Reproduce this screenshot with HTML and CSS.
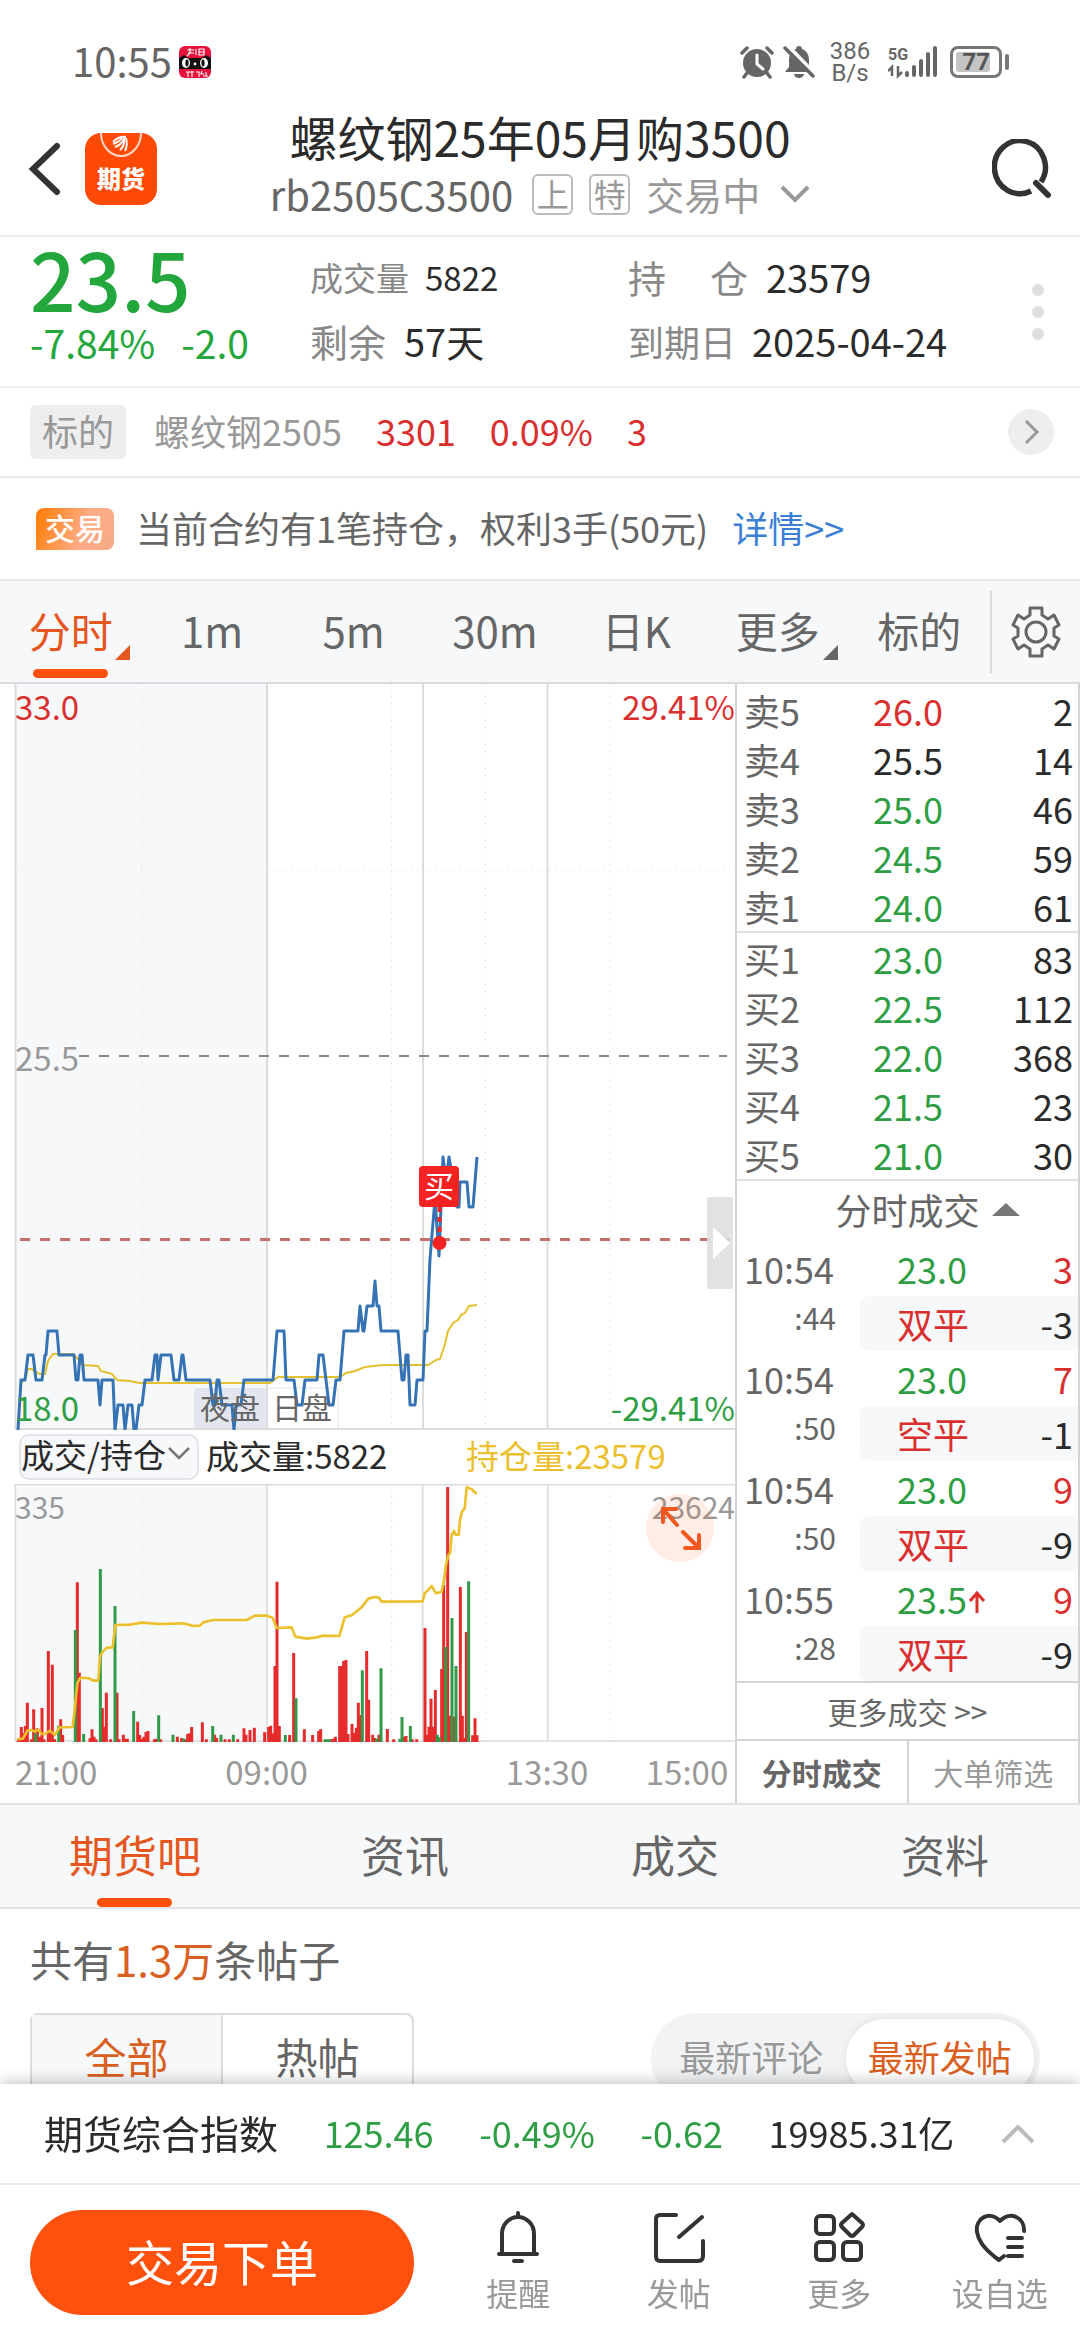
FILE: index.html
```html
<!DOCTYPE html>
<html lang="zh-CN">
<head>
    <meta charset="UTF-8">
    <meta name="viewport" content="width=device-width, initial-scale=1.0">
    <title>螺纹钢25年05月购3500</title>
    <link rel="stylesheet" href="styles.css">
</head>
<body>

    <!-- Status bar -->
    <div class="status-bar">
        <span class="clock">10:55</span>
        <svg class="app-badge" viewBox="0 0 34 34" width="34" height="34">
            <rect x="1" y="1" width="32" height="32" rx="6" fill="#e5133c"/>
            <path d="M1 13l5-3 4 3h14l4-3 5 3v11H1z" fill="#111"/>
            <ellipse cx="8" cy="18" rx="4" ry="5" fill="#fff"/>
            <ellipse cx="26" cy="18" rx="4" ry="5" fill="#fff"/>
            <ellipse cx="9" cy="18" rx="1.6" ry="3.4" fill="#111"/>
            <ellipse cx="25" cy="18" rx="1.6" ry="3.4" fill="#111"/>
            <circle cx="17" cy="19" r="1.4" fill="#fff"/>
            <path d="M9 5h7M10 8h6M12 3v5l-3 3M18 4v6M21 4h5v6h-5zM21 7h5M8 27h8M10 27v5M14 26v6M18 27h3v5M24 26l-1 3h3M25 31h5M28 27v4" stroke="#fff" stroke-width="1.1" fill="none"/>
        </svg>
        <div class="status-icons">
            <svg viewBox="0 0 34 34" width="34" height="34">
                <circle cx="17" cy="18" r="14" fill="#666"/>
                <path d="M2 8l5-5M32 8l-5-5M7 28l-3 4M27 28l3 4" stroke="#666" stroke-width="3.5" stroke-linecap="round"/>
                <path d="M17 10v9l6 5" stroke="#fff" stroke-width="3" fill="none" stroke-linecap="round"/>
            </svg>
            <svg viewBox="0 0 34 34" width="34" height="34">
                <path d="M17 1c2 0 3 1 3 3 5 2 7 6 7 11v7l4 5H3l4-5v-7c0-5 2-9 7-11 0-2 1-3 3-3z" fill="#666"/>
                <path d="M12 29h10a5 4 0 0 1-10 0z" fill="#666"/>
                <path d="M5 0l28 29" stroke="#fff" stroke-width="4"/>
                <path d="M3 3l28 28" stroke="#666" stroke-width="3.5" stroke-linecap="round"/>
            </svg>
            <span class="net-speed">386<br>B/s</span>
            <svg viewBox="0 0 50 34" width="50" height="34">
                <text x="0" y="15" class="net-type">5G</text>
                <path d="M4 31V22l-4 4M10 21v10l4-4" stroke="#666" stroke-width="2.5" fill="none"/>
                <path d="M19 28v2M26 22v8M33 16v14M40 9v21M47 3v27" stroke="#666" stroke-width="4" stroke-linecap="round"/>
            </svg>
            <span class="battery"><span class="battery-level">77</span></span>
        </div>
    </div>

    <!-- Header -->
    <header class="header">
        <a href="#" class="back" aria-label="返回">
            <svg viewBox="0 0 34 54" width="34" height="54"><path d="M29 4L5 27l24 23" fill="none" stroke="#333" stroke-width="6" stroke-linecap="round"/></svg>
        </a>
        <div class="app-logo">
            <svg viewBox="0 0 72 26" width="72" height="26">
                <path d="M16 0a20 23 0 0 0 40 0" fill="none" stroke="#ffd5c5" stroke-width="2"/>
                <path d="M28 9q6-6 13-5M28 11q6-2 9-6M30 14q6-2 9-8M35 17q5-4 4-12M40 18q3-6 1-13" fill="none" stroke="#fff" stroke-width="2"/>
            </svg>
            <span>期货</span>
        </div>
        <div class="heading">
            <h1>螺纹钢25年05月购3500</h1>
            <div class="sub-heading">
                <span class="code">rb2505C3500</span>
                <span class="mark">上</span>
                <span class="mark">特</span>
                <span class="state">交易中</span>
                <svg viewBox="0 0 30 20" width="30" height="20"><path d="M2 3l13 13L28 3" fill="none" stroke="#999" stroke-width="4"/></svg>
            </div>
        </div>
        <button class="search" aria-label="搜索">
            <svg viewBox="0 0 60 60" width="60" height="60"><path d="M39 52a25.500 26.500 0 1 1 10-9" fill="none" stroke="#333" stroke-width="5.500"/><path d="M44 44l12 12" stroke="#333" stroke-width="6" stroke-linecap="round"/></svg>
        </button>
    </header>

    <!-- Quote -->
    <section class="quote">
        <div class="quote-main">
            <div class="price">23.5</div>
            <div class="change"><span>-7.84%</span><span>-2.0</span></div>
        </div>
        <div class="quote-col">
            <div class="small"><span class="caption">成交量</span>5822</div>
            <div><span class="caption">剩余</span>57天</div>
        </div>
        <div class="quote-col wide">
            <div><span class="caption spread"><span>持</span><span>仓</span></span>23579</div>
            <div><span class="caption date">到期日</span>2025-04-24</div>
        </div>
        <button class="dots" aria-label="更多行情"><i></i><i></i><i></i></button>
    </section>

    <section class="underlying">
        <span class="tag">标的</span>
        <span class="name">螺纹钢2505</span>
        <span class="value red">3301</span>
        <span class="value red">0.09%</span>
        <span class="value red">3</span>
        <a href="#" class="go" aria-label="查看标的">
            <svg viewBox="0 0 46 46" width="46" height="46"><circle cx="23" cy="23" r="23" fill="#eee"/><path d="M18 12l11 11-11 11" fill="none" stroke="#999" stroke-width="3"/></svg>
        </a>
    </section>

    <section class="notice">
        <span class="trade-tag">交易</span>
        <p>当前合约有1笔持仓，权利3手(50元)<a href="#">详情&gt;&gt;</a></p>
    </section>

    <!-- Period tabs -->
    <nav class="period-tabs">
        <div class="period-list">
            <button class="active corner">分时</button>
            <button>1m</button>
            <button>5m</button>
            <button>30m</button>
            <button>日K</button>
            <button class="corner">更多</button>
            <button>标的</button>
        </div>
        <button class="settings" aria-label="设置">
            <svg viewBox="0 0 50 54" width="50" height="54" fill="none" stroke="#666" stroke-width="3" stroke-linejoin="round">
                <path d="M19 3h12v7l6 4 6-4 5 10-5 3v8l5 3-5 10-6-4-6 4v7H19v-7l-6-4-6 4-5-10 5-3v-8l-5-3 5-10 6 4 6-4z"/>
                <circle cx="25" cy="27" r="10"/>
            </svg>
        </button>
    </nav>

    <!-- Chart and order book -->
    <main class="market">
        <div class="charts">
            <div class="chart">
                <svg viewBox="0 -10 735 746">
                    <rect x="15" y="-10" width="252" height="746" fill="#f7f8fa"/>
                    <rect x="194" y="694" width="73" height="42" rx="4" fill="#e3e6ee"/>
                    <rect x="267" y="694" width="71" height="42" rx="4" fill="#fff" stroke="#f0f0f0" stroke-width="2"/>
                    <path class="grid-line" d="M15.500-10V736M267-10V736M423-10V736M547.500-10V736M15 735H735"/>
                    <path class="grid-dots" d="M142-10V736M391.500-10V736M485.500-10V736M610-10V736M15 176H735M15 548H735"/>
                    <path d="M79 362H727" stroke="#888" stroke-width="2" stroke-dasharray="10 10"/>
                    <path d="M20 545.500H730" stroke="#c4706c" stroke-width="3" stroke-dasharray="10 10"/>
                    <polyline fill="none" stroke="#e5c02e" stroke-width="2" points="18,736 21,689 25,686 28,675 32,675 35,678 40,680 45,680 48,667 50,664 53,660 73,660 78,665 82,671 98,672 101,677 112,680 117,686 130,687 140,689 270,689 278,683 340,683 346,679 355,677 365,673 383,671 428,671 436,666 440,665 445,650 448,637 453,629 458,626 461,621 465,619 469,612 477,611"/>
                    <polyline fill="none" stroke="#3673b5" stroke-width="3" stroke-linejoin="round" points="18,736 21,686 25,686 28,661 33,661 36,686 42,686 45,661 46,661 48,637 57,637 59,661 74,661 76,686 78,686 80,661 82,661 84,686 98,686 100,711 102,686 113,686 115,736 118,711 123,711 125,736 128,711 132,711 134,736 136,736 139,711 142,711 145,686 152,686 155,661 157,661 158,686 161,661 171,661 174,686 179,686 182,661 183,661 186,686 210,686 213,711 215,711 217,686 219,686 222,711 232,711 234,736 236,711 241,711 244,686 273,686 277,637 284,637 286,686 294,686 297,711 302,711 305,686 317,686 319,661 323,661 326,686 329,711 333,711 336,686 340,686 344,637 358,637 360,612 363,637 364,637 367,612 373,612 375,587 377,612 379,612 381,637 398,637 402,686 404,686 406,661 408,661 410,711 415,711 417,686 423,686 425,637 427,637 430,565 435,505 439,562 443,463 446,488 449,463 451,475 457,513 459,513 460,488 467,488 469,513 473,513 475,488 477,463"/>
                    <path d="M439.500 513V545" stroke="#f52222" stroke-width="4" stroke-dasharray="5 5"/>
                    <circle cx="439.500" cy="549" r="7" fill="#f52222"/>
                    <rect x="707" y="503" width="26" height="92" rx="2" fill="#ddd" fill-opacity=".85"/>
                    <path d="M713 533v32l17-16z" fill="#fff"/>
                </svg>
                <span class="label top-left red">33.0</span>
                <span class="label top-right red">29.41%</span>
                <span class="label middle">25.5</span>
                <span class="label bottom-left green">18.0</span>
                <span class="label bottom-right green">-29.41%</span>
                <span class="session night">夜盘</span>
                <span class="session day">日盘</span>
                <span class="buy-pin">买</span>
            </div>

            <div class="indicator">
                <div class="select-box">
                    <select aria-label="副图指标"><option>成交/持仓</option></select>
                    <svg viewBox="0 0 24 16" width="24" height="16"><path d="M2 2l10 10L22 2" fill="none" stroke="#777" stroke-width="2.500"/></svg>
                </div>
                <span class="volume-total">成交量:5822</span>
                <span class="position-total">持仓量:23579</span>
            </div>

            <div class="chart">
                <!-- three drawing units per pixel -->
                <svg viewBox="0 42 2205 774">
                    <rect x="45" y="42" width="756" height="774" fill="#f7f8fa"/>
                    <path class="grid-line big" d="M46 42V816M801 42V816M1268 42V816M1643 42V816M45 44H2205M45 813H2205"/>
                    <path class="grid-dots big" d="M426 42V816M1175 42V816M1457 42V816M1831 42V816"/>
                    <path id="redBars" stroke="#e52b2b" stroke-width="9"/>
                    <path id="greenBars" stroke="#319a48" stroke-width="9"/>
                    <polyline fill="none" stroke="#ebc02c" stroke-width="8" stroke-linejoin="round" points="52,808 68,806 75,795 82,782 95,780 105,785 115,778 125,792 135,792 150,782 165,795 178,772 218,771 224,720 232,640 240,624 264,624 280,632 295,632 300,560 308,545 320,533 338,532 346,465 390,464 425,458 480,462 550,460 580,468 600,467 610,457 640,450 740,450 765,437 800,437 818,443 830,474 875,472 886,500 920,506 950,502 970,497 1018,498 1034,442 1055,436 1085,412 1105,386 1125,381 1137,383 1145,395 1268,394 1274,370 1285,360 1295,348 1308,370 1325,365 1333,325 1338,285 1345,255 1350,250 1355,195 1362,183 1366,193 1376,195 1380,150 1386,125 1394,115 1400,52 1415,58 1430,72"/>
                </svg>
                <span class="label small-label volume-left">335</span>
                <span class="label small-label volume-right">23624</span>
                <button class="expand" aria-label="放大">
                    <svg viewBox="0 0 68 68" width="68" height="68" fill="none" stroke="#f2571f" stroke-width="4" stroke-linecap="round">
                        <path d="M31 31L18 16M17 28V15h13M37 38l15 15M39 54h14V41"/>
                    </svg>
                </button>
            </div>

            <div class="time-axis">
                <span>21:00</span><span>09:00</span><span>13:30</span><span>15:00</span>
            </div>
        </div>

        <aside class="book">
            <table class="orders">
                <tr><th>卖5</th><td class="red">26.0</td><td>2</td></tr>
                <tr><th>卖4</th><td>25.5</td><td>14</td></tr>
                <tr><th>卖3</th><td class="green">25.0</td><td>46</td></tr>
                <tr><th>卖2</th><td class="green">24.5</td><td>59</td></tr>
                <tr><th>卖1</th><td class="green">24.0</td><td>61</td></tr>
            </table>
            <table class="orders">
                <tr><th>买1</th><td class="green">23.0</td><td>83</td></tr>
                <tr><th>买2</th><td class="green">22.5</td><td>112</td></tr>
                <tr><th>买3</th><td class="green">22.0</td><td>368</td></tr>
                <tr><th>买4</th><td class="green">21.5</td><td>23</td></tr>
                <tr><th>买5</th><td class="green">21.0</td><td>30</td></tr>
            </table>
            <button class="book-title">分时成交 <i class="up"></i></button>
            <table class="ticks">
                <tr><td>10:54</td><td class="green">23.0</td><td class="red">3</td></tr>
                <tr class="detail"><td>:44</td><td class="red">双平</td><td>-3</td></tr>
                <tr><td>10:54</td><td class="green">23.0</td><td class="red">7</td></tr>
                <tr class="detail"><td>:50</td><td class="red">空平</td><td>-1</td></tr>
                <tr><td>10:54</td><td class="green">23.0</td><td class="red">9</td></tr>
                <tr class="detail"><td>:50</td><td class="red">双平</td><td>-9</td></tr>
                <tr><td>10:55</td><td class="green">23.5<svg viewBox="0 0 20 24" width="20" height="24"><path d="M10 23V4M3 11l7-8 7 8" fill="none" stroke="#d9302f" stroke-width="3"/></svg></td><td class="red">9</td></tr>
                <tr class="detail"><td>:28</td><td class="red">双平</td><td>-9</td></tr>
            </table>
            <a href="#" class="more-ticks">更多成交 &gt;&gt;</a>
            <div class="book-tabs">
                <button class="active">分时成交</button>
                <button>大单筛选</button>
            </div>
        </aside>
    </main>

    <!-- Community -->
    <nav class="page-tabs">
        <button class="active">期货吧</button>
        <button>资讯</button>
        <button>成交</button>
        <button>资料</button>
    </nav>

    <section class="posts">
        <p>共有<em>1.3万</em>条帖子</p>
        <div class="filters">
            <div class="segment">
                <button class="active">全部</button>
                <button>热帖</button>
            </div>
            <div class="sort">
                <button>最新评论</button>
                <button class="active">最新发帖</button>
            </div>
        </div>
    </section>

    <!-- Bottom bar -->
    <footer class="bottom-bar">
        <div class="index-row">
            <span class="index-name">期货综合指数</span>
            <span class="green">125.46</span>
            <span class="green">-0.49%</span>
            <span class="green">-0.62</span>
            <span>19985.31亿</span>
            <svg viewBox="0 0 36 22" width="36" height="22"><path d="M3 19L18 4l15 15" fill="none" stroke="#bbb" stroke-width="4"/></svg>
        </div>
        <div class="action-row">
            <button class="order-button">交易下单</button>
            <div class="actions">
                <button>
                    <svg viewBox="0 0 54 54" width="54" height="54"><path d="M8 44h38M11 43V24a16 17 0 0 1 32 0v19M27 7V3M23 51h8"/></svg>
                    提醒
                </button>
                <button>
                    <svg viewBox="0 0 54 54" width="54" height="54"><path d="M24 5H8q-4 0-4 4v37q0 5 4 5h38q5 0 5-5V31M50 7L27 27"/></svg>
                    发帖
                </button>
                <button>
                    <svg viewBox="0 0 54 54" width="54" height="54"><rect x="4" y="6" width="18" height="18" rx="4"/><rect x="4" y="32" width="18" height="18" rx="4"/><rect x="31" y="32" width="18" height="18" rx="4"/><path d="M40 4l10 9q2 2 0 4l-8 8q-2 2-4 0l-8-8q-2-2 0-4z"/></svg>
                    更多
                </button>
                <button>
                    <svg viewBox="0 0 54 54" width="54" height="54"><path d="M51 21C52 8 37 0 27 11 17 0 2 8 4 22q2 14 22 28l5-4M35 28h14M35 37h14M35 46h14"/></svg>
                    设自选
                </button>
            </div>
        </div>
    </footer>

    <script>
        // Bar position and top of each volume bar
        const redBars = [[55,808],[64,771],[70,790],[76,768],[82,698],[94,808],[101,718],[112,775],[119,800],[126,714],[132,808],[145,543],[151,780],[157,584],[164,808],[182,748],[188,795],[232,337],[238,608],[270,805],[276,778],[282,800],[288,808],[307,714],[313,770],[319,668],[332,808],[351,668],[357,808],[370,794],[376,806],[382,806],[413,755],[419,795],[426,806],[432,800],[438,786],[444,783],[463,808],[470,806],[482,808],[532,800],[545,804],[557,808],[563,792],[569,790],[575,771],[607,757],[619,808],[644,794],[650,804],[675,808],[688,808],[713,808],[732,775],[738,794],[750,780],[763,773],[794,787],[806,771],[812,767],[819,790],[825,588],[831,335],[838,768],[869,795],[881,549],[913,778],[938,795],[956,783],[962,778],[994,808],[1000,806],[1006,800],[1019,588],[1025,588],[1031,573],[1038,570],[1044,792],[1056,762],[1063,788],[1069,773],[1075,698],[1081,735],[1100,543],[1106,689],[1118,794],[1124,804],[1137,794],[1162,777],[1181,808],[1212,800],[1218,798],[1237,808],[1250,808],[1275,474],[1281,794],[1287,770],[1293,686],[1300,770],[1306,660],[1325,597],[1331,345],[1343,51],[1349,737],[1361,740],[1381,351],[1387,737],[1393,804],[1399,486],[1418,796],[1425,745],[1431,796]];
        const greenBars = [[107,790],[176,767],[226,480],[251,792],[301,297],[345,408],[401,723],[476,736],[519,794],[551,806],[638,768],[663,794],[700,794],[856,795],[888,685],[975,808],[981,808],[988,808],[1087,601],[1130,806],[1143,595],[1200,806],[1206,741],[1231,768],[1312,794],[1318,802],[1337,531],[1356,444],[1368,588],[1406,334]];

        function drawBars(id, bars) {
            const d = bars.map(([x, top]) => `M${x} 816V${top}`).join("");
            document.getElementById(id).setAttribute("d", d);
        }

        drawBars("redBars", redBars);
        drawBars("greenBars", greenBars);
    </script>
</body>
</html>
```
FILE: styles.css
```css
* {
    box-sizing: border-box;
}
body {
    margin: 0;
    font-family: "Noto Sans CJK SC", sans-serif;
    font-size: 36px;
    line-height: 48px;
    color: #2b2b2b;
    background: #fff;
}
button, select {
    font: inherit;
    color: inherit;
    background: none;
    border: none;
    padding: 0;
    cursor: pointer;
}
a {
    color: #3a7fd5;
    text-decoration: none;
}
svg {
    display: block;
}
.red {
    color: #d9302f;
}
.green {
    color: #2e9e44;
}

/* Status bar */
.status-bar {
    display: flex;
    align-items: center;
    height: 107px;
    padding: 16px 70px 0 72px;
    color: #666;
}
.clock {
    margin-right: 6px;
    padding-bottom: 4px;
    font-size: 40px;
}
.status-icons {
    display: flex;
    align-items: center;
    gap: 8px;
    margin-left: auto;
}
.net-speed {
    width: 52px;
    margin-right: 4px;
    font-family: Roboto, sans-serif;
    font-size: 24px;
    line-height: 22px;
    text-align: center;
}
.net-type {
    font: bold 16px Roboto, sans-serif;
    fill: #666;
}
.battery {
    position: relative;
    width: 52px;
    height: 32px;
    margin: 0 8px 0 4px;
    padding: 3px;
    border: 3px solid #777;
    border-radius: 8px;
}
.battery::after {
    content: "";
    position: absolute;
    right: -10px;
    top: 5px;
    width: 4px;
    height: 16px;
    border-radius: 2px;
    background: #777;
}
.battery-level {
    display: block;
    width: 34px;
    height: 20px;
    border-radius: 3px;
    background: #c4c4c4;
    color: #555;
    font: bold 24px/20px Roboto, sans-serif;
    text-align: right;
}

/* Header */
.header {
    display: flex;
    align-items: center;
    height: 130px;
    padding: 0 28px 4px;
    border-bottom: 2px solid #ebebeb;
}
.back {
    width: 57px;
}
.app-logo {
    width: 72px;
    height: 72px;
    border-radius: 16px;
    background: #ff4a05;
    color: #fff;
    font-size: 24px;
    font-weight: 900;
    line-height: 38px;
    text-align: center;
}
.heading {
    flex: 1;
    padding: 0 69px 10px 0;
    text-align: center;
}
h1 {
    margin: 0;
    font-size: 48px;
    font-weight: 400;
    line-height: 60px;
}
.sub-heading {
    display: flex;
    align-items: center;
    justify-content: center;
    gap: 16px;
    height: 57px;
    color: #999;
    font-size: 38px;
}
.code {
    margin-right: 3px;
    font-size: 40px;
    color: #666;
}
.mark {
    width: 41px;
    height: 41px;
    border: 2px solid #bbb;
    border-radius: 6px;
    font-size: 32px;
    line-height: 35px;
}
.state {
    margin-right: 4px;
}

/* Quote */
.quote {
    display: flex;
    height: 151px;
    padding: 0 30px;
    border-bottom: 2px solid #f2f2f2;
}
.quote-main {
    width: 280px;
    color: #23a63c;
}
.price {
    height: 82px;
    font-size: 80px;
    font-weight: 500;
    line-height: 80px;
}
.change {
    display: flex;
    gap: 26px;
    font-size: 39px;
    line-height: 46px;
}
.quote-col {
    width: 318px;
    padding-top: 8px;
    font-size: 38px;
    line-height: 64px;
}
.caption {
    margin-right: 18px;
    color: #888;
}
.quote-col .small {
    font-size: 33px;
}
.small .caption {
    margin-right: 16px;
}
.quote-col.wide {
    flex: 1;
    white-space: nowrap;
}
.caption.date {
    margin-right: 16px;
    font-size: 36px;
}
.caption.spread {
    display: inline-flex;
    justify-content: space-between;
    width: 120px;
}
.dots {
    display: flex;
    flex-direction: column;
    justify-content: center;
    gap: 10px;
    padding-right: 6px;
}
.dots i {
    width: 12px;
    height: 12px;
    border-radius: 50%;
    background: #dedede;
}
.underlying {
    display: flex;
    align-items: center;
    gap: 34px;
    height: 90px;
    padding: 0 26px 0 30px;
    border-bottom: 2px solid #ebebeb;
}
.tag {
    height: 54px;
    margin-right: -6px;
    padding: 0 12px;
    border-radius: 6px;
    background: #eee;
    color: #999;
    line-height: 50px;
}
.name, .value {
    padding-bottom: 4px;
}
.name {
    color: #999;
}
.go {
    margin-left: auto;
}
.notice {
    display: flex;
    align-items: center;
    height: 101px;
    padding: 0 36px;
    color: #666;
}
.notice p {
    margin: 0;
    padding-bottom: 4px;
}
.notice a {
    margin-left: 24px;
}
.trade-tag {
    width: 78px;
    height: 42px;
    margin-right: 22px;
    border-radius: 8px 8px 8px 0;
    background: linear-gradient(110deg, #ff7a00, #ffac85 60%, #f5aa88);
    color: #fff;
    font-size: 30px;
    font-weight: 500;
    line-height: 38px;
    text-align: center;
}

/* Period tabs */
.period-tabs {
    display: flex;
    align-items: center;
    height: 105px;
    background: #f7f8fa;
    border-top: 2px solid #ebebeb;
    border-bottom: 2px solid #d9dade;
}
.period-list {
    display: flex;
    flex: 1;
    height: 100%;
    color: #666;
    font-size: 42px;
}
.period-list button {
    position: relative;
    flex: 1;
    padding-bottom: 4px;
}
.period-list .active, .page-tabs .active {
    color: #e5571f;
}
.period-list .active::after, .page-tabs .active::after {
    content: "";
    position: absolute;
    left: 50%;
    bottom: 4px;
    width: 75px;
    height: 9px;
    margin-left: -38px;
    border-radius: 5px;
    background: #ff510d;
}
.corner::before {
    content: "";
    position: absolute;
    right: 11px;
    bottom: 22px;
    border-left: 15px solid transparent;
    border-bottom: 15px solid currentColor;
}
.settings {
    display: flex;
    align-items: center;
    justify-content: center;
    width: 90px;
    height: 82px;
    border-left: 2px solid #dcdcdc;
}

/* Charts */
.market {
    display: grid;
    grid-template-columns: minmax(0, 1fr) 345px;
    border-bottom: 2px solid #e2e2e2;
}
.chart {
    position: relative;
}
.chart > svg {
    width: 100%;
}
.grid-line {
    stroke: #dcdcdc;
    stroke-width: 2;
}
.grid-dots {
    stroke: #e8e8e8;
    stroke-width: 1;
    stroke-dasharray: 2 4;
}
.grid-line.big {
    stroke-width: 5;
}
.grid-dots.big {
    stroke-width: 3;
    stroke-dasharray: 6 12;
}
.label {
    position: absolute;
    font-size: 33px;
    line-height: 40px;
}
.top-left {
    top: 2px;
    left: 15px;
}
.top-right {
    top: 2px;
    right: 0;
}
.middle {
    top: 50%;
    left: 15px;
    margin-top: -20px;
    color: #999;
}
.bottom-left {
    bottom: 3px;
    left: 15px;
}
.bottom-right {
    bottom: 3px;
    right: 0;
}
.session {
    position: absolute;
    bottom: 3px;
    left: 200px;
    color: #666;
    font-size: 30px;
    line-height: 42px;
}
.session.day {
    left: 272px;
}
.buy-pin {
    position: absolute;
    top: 482px;
    left: 419px;
    width: 40px;
    height: 41px;
    border-radius: 4px;
    background: #f52222;
    color: #fff;
    font-size: 30px;
    line-height: 37px;
    text-align: center;
}
.indicator {
    display: flex;
    align-items: center;
    height: 54px;
    padding-left: 19px;
    font-size: 33px;
}
.select-box {
    display: flex;
    align-items: center;
    width: 180px;
    height: 46px;
    padding-bottom: 6px;
    border: 2px solid #e2e4ea;
    border-radius: 10px;
    background: #f7f8fa;
}
.select-box select {
    width: 146px;
    height: 50px;
    appearance: none;
}
.volume-total, .position-total {
    padding-bottom: 4px;
}
.volume-total {
    width: 260px;
    margin-left: 7px;
}
.position-total {
    color: #ebc02c;
}
.small-label {
    color: #999;
    font-size: 30px;
}
.volume-left {
    top: 2px;
    left: 15px;
}
.volume-right {
    top: 2px;
    right: 0;
}
.expand {
    position: absolute;
    top: 10px;
    right: 21px;
    border-radius: 50%;
    background: rgba(255, 81, 13, 0.1);
}
.time-axis {
    display: grid;
    grid-template-columns: 127fr 249fr 60fr 192fr 88fr;
    padding: 5px 4px 8px 15px;
    color: #999;
    font-size: 33px;
    text-align: center;
}
.time-axis span:first-child {
    text-align: left;
}
.time-axis span:nth-child(3) {
    grid-column: 4;
}

/* Order book */
.book {
    display: flex;
    flex-direction: column;
    padding-top: 1px;
    border-left: 2px solid #d4d4d4;
    border-right: 2px solid #d4d4d4;
}
.book table {
    width: 100%;
    border-collapse: collapse;
    table-layout: fixed;
}
.orders {
    border-bottom: 2px solid #e2e2e2;
}
.orders td, .orders th {
    height: 49px;
    padding: 0;
    line-height: 47px;
    vertical-align: top;
}
.orders th {
    width: 136px;
    padding-left: 7px;
    color: #666;
    font-weight: 400;
    text-align: left;
}
.orders tr:first-child > * {
    height: 51px;
    padding-top: 2px;
}
.book td:last-child {
    padding-right: 5px;
    text-align: right;
}
.book-title {
    display: flex;
    align-items: center;
    justify-content: center;
    gap: 12px;
    height: 60px;
    padding: 0 0 4px 40px;
    color: #666;
}
.up {
    border: 14px solid transparent;
    border-top: 0;
    border-bottom: 13px solid #777;
}
.ticks td {
    height: 55px;
    padding: 0;
    line-height: 55px;
    white-space: nowrap;
}
.ticks td:first-child {
    width: 123px;
    padding-left: 7px;
    color: #666;
}
.ticks td:nth-child(2) {
    padding-left: 37px;
}
.ticks .detail td:first-child {
    padding-right: 24px;
    font-size: 30px;
    line-height: 42px;
    text-align: right;
    vertical-align: top;
}
.ticks .detail td:nth-child(n+2) {
    background: #f7f8fa;
}
.ticks .detail td:nth-child(2) {
    border-radius: 8px 0 0 8px;
}
.ticks svg {
    display: inline-block;
}
.more-ticks {
    height: 60px;
    border-top: 2px solid #d4d4d4;
    border-bottom: 2px solid #d4d4d4;
    color: #666;
    font-size: 30px;
    line-height: 56px;
    text-align: center;
}
.book-tabs {
    display: flex;
    flex: 1;
    color: #999;
    font-size: 30px;
}
.book-tabs button {
    flex: 1;
}
.book-tabs .active {
    border-right: 2px solid #d4d4d4;
    color: #666;
    font-weight: 700;
}

/* Community */
.page-tabs {
    display: flex;
    height: 104px;
    background: #f7f8fa;
    border-bottom: 2px solid #e2e2e2;
    color: #666;
    font-size: 44px;
}
.page-tabs button {
    position: relative;
    flex: 1;
    padding-bottom: 4px;
}
.page-tabs .active::after {
    bottom: 0;
}
.posts {
    padding: 20px 40px 0 30px;
    color: #666;
}
.posts p {
    margin: 0 0 24px;
    font-size: 42px;
    line-height: 60px;
}
.posts em {
    color: #d9601f;
    font-style: normal;
}
.filters {
    display: flex;
    justify-content: space-between;
}
.segment {
    display: flex;
    width: 384px;
    height: 90px;
    border: 2px solid #dcdcdf;
    border-radius: 8px;
    font-size: 42px;
}
.segment button, .sort button {
    flex: 1;
    padding-bottom: 4px;
}
.segment .active {
    border-right: 2px solid #dcdcdf;
    background: #f7f8fa;
    color: #d9601f;
}
.sort {
    display: flex;
    width: 389px;
    height: 90px;
    padding: 6px;
    border-radius: 45px;
    background: #f2f3f5;
    color: #999;
}
.sort .active {
    border-radius: 39px;
    background: #fff;
    box-shadow: 0 0 8px rgba(0, 0, 0, 0.08);
    color: #d9601f;
}

/* Bottom bar */
.bottom-bar {
    position: fixed;
    right: 0;
    bottom: 0;
    left: 0;
    background: #fff;
    box-shadow: 0 0 16px rgba(0, 0, 0, 0.3);
}
.index-row {
    display: flex;
    align-items: center;
    justify-content: space-between;
    height: 101px;
    padding: 0 44px;
    border-bottom: 2px solid #ececec;
}
.index-row span {
    padding-bottom: 4px;
}
.index-name {
    font-size: 39px;
}
.action-row {
    display: flex;
    align-items: center;
    height: 155px;
    padding-left: 30px;
}
.order-button {
    width: 384px;
    height: 105px;
    padding-bottom: 6px;
    border-radius: 53px;
    background: #ff510d;
    color: #fff;
    font-size: 48px;
}
.actions {
    display: flex;
    flex: 1;
    padding-left: 24px;
}
.actions button {
    display: flex;
    flex: 1;
    flex-direction: column;
    align-items: center;
    gap: 4px;
    color: #999;
    font-size: 32px;
}
.actions svg {
    fill: none;
    stroke: #333;
    stroke-width: 4;
    stroke-linecap: round;
    stroke-linejoin: round;
}
```
